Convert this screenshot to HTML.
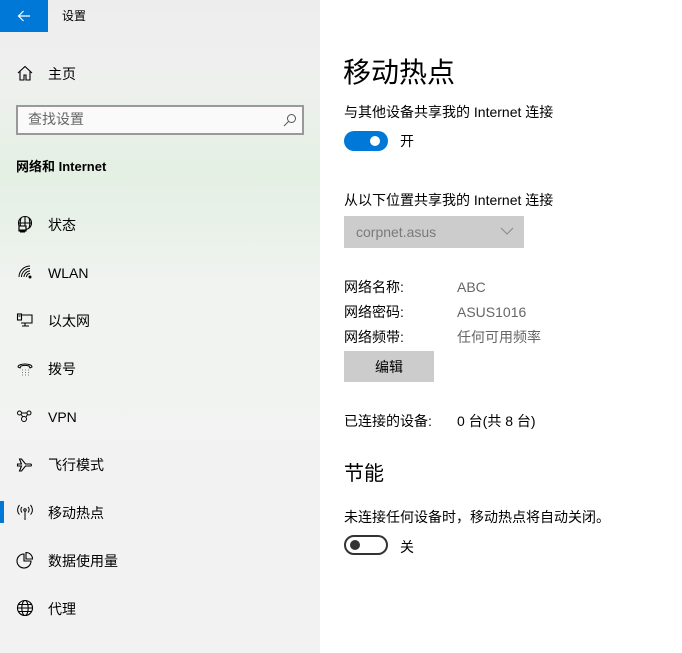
<!DOCTYPE html>
<html><head><meta charset="utf-8"><style>
*{margin:0;padding:0;box-sizing:border-box}
body{width:682px;height:653px;overflow:hidden;position:relative;font-family:"Liberation Sans","Noto Sans CJK SC",sans-serif;color:#000;background:#fff;font-size:14px}
.side{position:absolute;left:0;top:0;width:320px;height:653px;background:linear-gradient(180deg,#ededed 0px,#eef0ee 90px,#e4f0e4 170px,#e8f1e8 220px,#f1f3f1 290px,#f2f2f2 653px)}
.a{position:absolute;white-space:nowrap;line-height:1}
.ic{position:absolute;left:16px;width:18px;height:18px}
</style></head><body>
<div class="side"></div>
<div class="a" style="left:0;top:0;width:48px;height:32px;background:#0078d7"></div>
<svg class="a" style="left:16px;top:8px" width="16" height="16" viewBox="0 0 16 16"><path d="M14 8H2.5M7.5 3L2.5 8l5 5" stroke="#fff" stroke-width="1.2" fill="none"/></svg>
<div class="a" style="left:62px;top:10px;font-size:12px">设置</div>

<svg class="ic" style="top:64px" viewBox="0 0 18 18"><path d="M2 9L9 2.5 16 9M4 7.5V16h4v-5h2v5h4V7.5" stroke="#000" stroke-width="1.1" fill="none"/></svg>
<div class="a" style="left:48px;top:67px">主页</div>

<div class="a" style="left:16px;top:105px;width:288px;height:30px;border:2px solid #999;background:#fafafa"></div>
<div class="a" style="left:28px;top:112px;color:#666">查找设置</div>
<svg class="a" style="left:282px;top:112px" width="16" height="16" viewBox="0 0 16 16"><circle cx="9.5" cy="6.5" r="4" stroke="#555" fill="none"/><path d="M6.5 9.5L2 14" stroke="#555"/></svg>

<div class="a" style="left:16px;top:160px;font-weight:bold;font-size:13px">网络和 Internet</div>

<svg class="ic" style="top:215px" viewBox="0 0 18 18" fill="none" stroke="#000" stroke-width="1.1"><circle cx="9" cy="8" r="6.5"/><path d="M2.5 8h13M9 1.5v13M5 3c-1 3-1 7 0 10M13 3c1 3 1 7 0 10"/><rect x="3" y="11" width="7" height="5" fill="#eaf1ea"/><path d="M3 11h7v4H3zM6.5 15v2M4 17h5"/></svg>
<div class="a" style="left:48px;top:218px">状态</div>

<svg class="ic" style="top:263px" viewBox="0 0 18 18" fill="none" stroke="#000" stroke-width="1"><path d="M3 14C3 8 8 3 14 3M5.5 14c0-4.5 4-8.5 8.5-8.5M8 14c0-3 3-6 6-6M10.5 14c0-2 1.5-3.5 3.5-3.5"/><circle cx="14" cy="14" r="1" fill="#000"/></svg>
<div class="a" style="left:48px;top:266px">WLAN</div>

<svg class="ic" style="top:311px" viewBox="0 0 18 18" fill="none" stroke="#000" stroke-width="1.1"><path d="M5 4h11v8H5M9 12v3M6 15h7"/><rect x="1.5" y="3" width="4" height="6"/><path d="M2.5 5h2"/></svg>
<div class="a" style="left:48px;top:314px">以太网</div>

<svg class="ic" style="top:359px" viewBox="0 0 18 18" fill="none" stroke="#000" stroke-width="1"><path d="M2 8c0-4 14-4 14 0l-2 1-1-2c-3-1-5-1-8 0l-1 2z"/><path d="M6 11h.5M9 11h.5M12 11h.5M6 13.5h.5M9 13.5h.5M12 13.5h.5M6 16h.5M9 16h.5M12 16h.5"/></svg>
<div class="a" style="left:48px;top:362px">拨号</div>

<svg class="ic" style="top:407px" viewBox="0 0 18 18" fill="none" stroke="#000" stroke-width="1"><circle cx="3.5" cy="6" r="2"/><circle cx="13" cy="6" r="2"/><circle cx="8" cy="12" r="2.5"/><path d="M5 7.5l2 2.5M11.5 7.5L10 10M6 6h5"/></svg>
<div class="a" style="left:48px;top:410px">VPN</div>

<svg class="ic" style="top:455px" viewBox="0 0 18 18" fill="none" stroke="#000" stroke-width="1.1"><path d="M1.5 9h4l-2-5h2l4 5h5c1.2 0 1.2 2 0 2h-5l-4 5h-2l2-5h-4z"/></svg>
<div class="a" style="left:48px;top:458px">飞行模式</div>

<div class="a" style="left:0;top:501px;width:4px;height:22px;background:#0078d7"></div>
<svg class="ic" style="top:503px" viewBox="0 0 18 18" fill="none" stroke="#000" stroke-width="1"><circle cx="9" cy="7" r="1.2"/><path d="M9 8.5V17M6 4c-1.5 1.5-1.5 4 0 5.5M12 4c1.5 1.5 1.5 4 0 5.5M3.5 2c-2.5 3-2.5 7 0 9.5M14.5 2c2.5 3 2.5 7 0 9.5"/></svg>
<div class="a" style="left:48px;top:506px">移动热点</div>

<svg class="ic" style="top:551px" viewBox="0 0 18 18" fill="none" stroke="#000" stroke-width="1.1"><path d="M8 3a7 7 0 1 0 7 7H8z"/><path d="M10 1.5a6.5 6.5 0 0 1 6.5 6.5H10z"/></svg>
<div class="a" style="left:48px;top:554px">数据使用量</div>

<svg class="ic" style="top:599px" viewBox="0 0 18 18" fill="none" stroke="#000" stroke-width="1.1"><circle cx="9" cy="9" r="7.5"/><ellipse cx="9" cy="9" rx="3.2" ry="7.5"/><path d="M1.5 9h15M2.5 5.5h13M2.5 12.5h13"/></svg>
<div class="a" style="left:48px;top:602px">代理</div>

<div class="a" style="left:343px;top:59px;font-size:28px">移动热点</div>
<div class="a" style="left:344px;top:105px">与其他设备共享我的 Internet 连接</div>
<div class="a" style="left:344px;top:131px;width:44px;height:20px;border-radius:10px;background:#0078d7"></div>
<div class="a" style="left:370px;top:136px;width:10px;height:10px;border-radius:5px;background:#fff"></div>
<div class="a" style="left:400px;top:134px">开</div>

<div class="a" style="left:344px;top:193px">从以下位置共享我的 Internet 连接</div>
<div class="a" style="left:344px;top:216px;width:180px;height:32px;background:#ccc"></div>
<div class="a" style="left:356px;top:225px;color:#7a7a7a">corpnet.asus</div>
<svg class="a" style="left:500px;top:226px" width="14" height="10" viewBox="0 0 14 10"><path d="M1 2l6 6 6-6" stroke="#888" fill="none"/></svg>

<div class="a" style="left:344px;top:280px">网络名称:</div><div class="a" style="left:457px;top:280px;color:#666">ABC</div>
<div class="a" style="left:344px;top:305px">网络密码:</div><div class="a" style="left:457px;top:305px;color:#666">ASUS1016</div>
<div class="a" style="left:344px;top:330px">网络频带:</div><div class="a" style="left:457px;top:330px;color:#666">任何可用频率</div>
<div class="a" style="left:344px;top:351px;width:90px;height:31px;background:#ccc"></div>
<div class="a" style="left:375px;top:360px">编辑</div>

<div class="a" style="left:344px;top:414px">已连接的设备:</div><div class="a" style="left:457px;top:414px">0 台(共 8 台)</div>
<div class="a" style="left:344px;top:464px;font-size:20px">节能</div>
<div class="a" style="left:344px;top:510px">未连接任何设备时，移动热点将自动关闭。</div>
<div class="a" style="left:344px;top:535px;width:44px;height:20px;border-radius:10px;border:2px solid #333"></div>
<div class="a" style="left:350px;top:540px;width:10px;height:10px;border-radius:5px;background:#333"></div>
<div class="a" style="left:400px;top:540px">关</div>
</body></html>
